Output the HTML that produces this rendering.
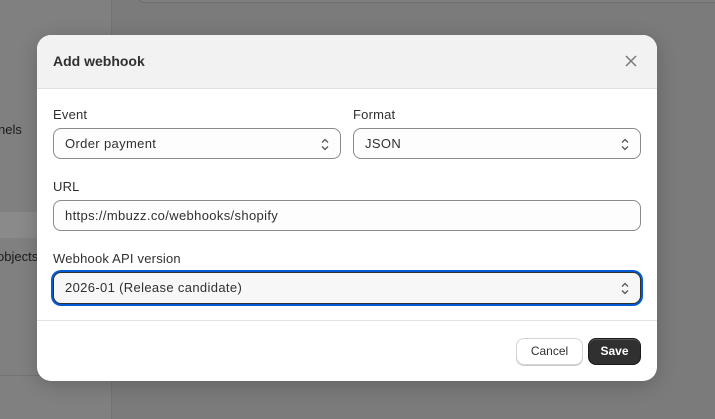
<!DOCTYPE html>
<html><head><style>
*{box-sizing:border-box;margin:0;padding:0}
body{width:715px;height:419px;overflow:hidden;background:#7b7b7b;font-family:"Liberation Sans",sans-serif;position:relative;color:#303030}
.side{position:absolute;left:0;top:0;width:112px;height:419px;background:#808080;border-right:1px solid #737373}
.band{position:absolute;left:0;top:212px;width:112px;height:26px;background:#8a8a8a}
.hl{position:absolute;left:0;top:375px;width:112px;height:1px;background:#737373}
.sidetxt{position:absolute;font-size:13px;color:#1a1a1a}
.card{position:absolute;left:138px;top:-10px;width:600px;height:13px;border:1px solid #6e6e6e;border-radius:10px;background:#7f7f7f}
.modal{position:absolute;left:37px;top:35px;width:620px;height:346px;background:#fff;border-radius:14px;overflow:hidden;box-shadow:0 4px 20px rgba(0,0,0,.2)}
.hd{height:54px;background:#f2f2f2;border-bottom:1px solid #e0e0e0;position:relative}
.hd h1{position:absolute;left:16px;top:18px;font-size:14px;font-weight:bold;color:#303030}
.x{position:absolute;left:587px;top:19px}
.lbl{position:absolute;font-size:13px;color:#303030;letter-spacing:0.2px}
.f{position:absolute;height:31px;border:1px solid #8a8a8a;border-radius:8px;background:#fdfdfd;font-size:13px;letter-spacing:0.35px;padding-left:11px;line-height:29px;color:#303030}
.f svg{position:absolute;right:11px;top:9px}
.foc{border:1px solid #303030;box-shadow:0 0 0 2px #005bd3;background:#f7f7f7}
.ft{position:absolute;left:0;top:285px;width:620px;height:1px;background:#e3e3e3}
.btn{position:absolute;top:303px;height:27px;border-radius:8px;font-size:12px;line-height:25px;text-align:center}
</style></head><body>
<div class="side"></div><div class="band"></div><div class="hl"></div>
<div class="sidetxt" style="left:-2px;top:122px">nels</div>
<div class="sidetxt" style="left:-3px;top:249px">objects</div>
<div class="card"></div>
<div class="modal">
 <div class="hd"><h1>Add webhook</h1>
  <svg class="x" width="14" height="14" viewBox="0 0 14 14"><path d="M2 2L12 12M12 2L2 12" stroke="#777" stroke-width="1.5"/></svg></div>
 <div class="lbl" style="left:16px;top:72px">Event</div>
 <div class="lbl" style="left:316px;top:72px">Format</div>
 <div class="f" style="left:16px;top:93px;width:288px">Order payment<svg width="8" height="13" viewBox="0 0 8 13"><path d="M1 4.5L4 1.5L7 4.5M1 8.5L4 11.5L7 8.5" fill="none" stroke="#555" stroke-width="1.3"/></svg></div>
 <div class="f" style="left:316px;top:93px;width:288px">JSON<svg width="8" height="13" viewBox="0 0 8 13"><path d="M1 4.5L4 1.5L7 4.5M1 8.5L4 11.5L7 8.5" fill="none" stroke="#555" stroke-width="1.3"/></svg></div>
 <div class="lbl" style="left:16px;top:144px">URL</div>
 <div class="f" style="left:16px;top:165px;width:588px">https://mbuzz.co/webhooks/shopify</div>
 <div class="lbl" style="left:16px;top:216px">Webhook API version</div>
 <div class="f foc" style="left:16px;top:237px;width:588px;height:32px">2026-01 (Release candidate)<svg width="8" height="13" viewBox="0 0 8 13"><path d="M1 4.5L4 1.5L7 4.5M1 8.5L4 11.5L7 8.5" fill="none" stroke="#555" stroke-width="1.3"/></svg></div>
 <div class="ft"></div>
 <div class="btn" style="left:479px;width:67px;border:1px solid #d4d4d4;background:#fff;color:#303030;box-shadow:0 1px 0 #ccc">Cancel</div>
 <div class="btn" style="left:551px;width:53px;background:#303030;color:#fff;font-weight:bold;border:1px solid #1a1a1a;box-shadow:inset 0 1px 0 #555">Save</div>
</div>
</body></html>
